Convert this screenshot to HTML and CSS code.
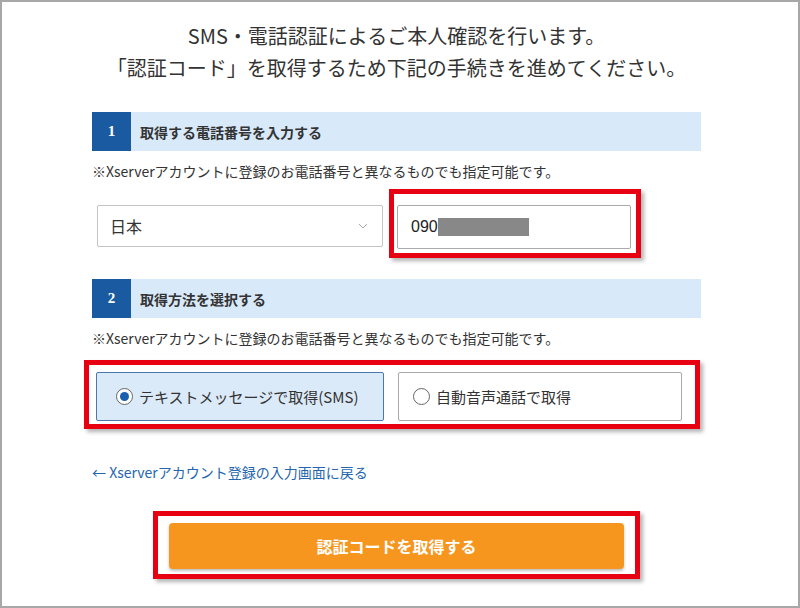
FILE: index.html
```html
<!DOCTYPE html>
<html>

<head>
  <meta charset="utf-8">
  <title>SMS・電話認証</title>
  <link rel="stylesheet" href="styles.css">
</head>

<body>
  <div class="page">

    <!-- Lead text -->
    <p class="lead">SMS・電話認証によるご本人確認を行います。<br>「認証コード」を取得するため下記の手続きを進めてください。</p>

    <!-- Step 1: phone number -->
    <h2 class="step-head"><span class="step-num">1</span>取得する電話番号を入力する</h2>
    <p class="note">※Xserverアカウントに登録のお電話番号と異なるものでも指定可能です。</p>
    <div class="phone-row">
      <div class="select">
        <span>日本</span>
        <svg class="chevron" width="10" height="6" viewBox="0 0 10 6"><path d="M1 1 L5 5 L9 1" fill="none" stroke="#aaa" stroke-width="1"/></svg>
      </div>
      <div class="mark mark-input">
        <div class="input">090<span class="redact"></span></div>
      </div>
    </div>

    <!-- Step 2: method -->
    <h2 class="step-head step-two"><span class="step-num">2</span>取得方法を選択する</h2>
    <p class="note">※Xserverアカウントに登録のお電話番号と異なるものでも指定可能です。</p>
    <div class="mark mark-radio">
      <div class="radio-row">
        <label class="option option-on"><span class="radio radio-on"></span>テキストメッセージで取得(SMS)</label>
        <label class="option option-wide"><span class="radio"></span>自動音声通話で取得</label>
      </div>
    </div>

    <p class="back"><a href="#">← Xserverアカウント登録の入力画面に戻る</a></p>

    <div class="mark mark-button">
      <button class="submit">認証コードを取得する</button>
    </div>

  </div>
</body>

</html>
```

FILE: styles.css
```css
body {
  margin: 0;
  padding: 0;
  background-color: #ffffff;
  font-family: "Noto Sans CJK JP", "Noto Sans", sans-serif;
  color: #333;
}

.page {
  width: 800px;
  height: 608px;
  box-sizing: border-box;
  border: 2px solid #a8a8a8;
  padding: 18px 97px 0 90px;
  overflow: hidden;
}

.lead {
  margin: 0;
  font-size: 20px;
  line-height: 32px;
  text-align: center;
}

/* Step headers */
.step-head {
  margin: 28px 0 0;
  height: 39px;
  display: flex;
  align-items: center;
  background-color: #d8e9fa;
  font-size: 14px;
  font-weight: bold;
  color: #333;
}

.step-two {
  margin-top: 30px;
}

.step-num {
  width: 39px;
  height: 39px;
  margin-right: 9px;
  display: flex;
  align-items: center;
  justify-content: center;
  background-color: #1a5aa0;
  color: white;
  font-family: "Liberation Serif", serif;
  font-size: 15px;
}

.note {
  margin: 10px 0 0;
  font-size: 14px;
  line-height: 20px;
}

/* Phone row */
.phone-row {
  margin-top: 24px;
  padding-left: 5px;
  display: flex;
  gap: 14px;
}

.select {
  width: 286px;
  height: 42px;
  box-sizing: border-box;
  border: 1px solid #c4c4c4;
  border-radius: 2px;
  padding: 0 12px;
  display: flex;
  align-items: center;
  justify-content: space-between;
  font-size: 16px;
}

.chevron {
  margin-right: 2px;
}

.input {
  width: 234px;
  height: 44px;
  box-sizing: border-box;
  border: 1px solid #aaa;
  border-radius: 2px;
  padding-left: 13px;
  display: flex;
  align-items: center;
  font-family: "Liberation Sans", Arial, sans-serif;
  font-size: 16px;
  color: #222;
}

.redact {
  display: inline-block;
  width: 91px;
  height: 18px;
  background-color: #888;
}

/* Red annotation frames */
.mark {
  position: relative;
}

.mark::after {
  content: "";
  position: absolute;
  border: 5px solid #e60012;
  box-shadow: 3px 3px 4px rgba(0, 0, 0, 0.3);
  pointer-events: none;
}

.mark-input::after {
  top: -16px;
  left: -8px;
  right: -10px;
  bottom: -9px;
}

.mark-radio {
  margin-top: 24px;
  width: 590px;
}

.mark-radio::after {
  top: -12px;
  left: -8px;
  right: -18px;
  bottom: -8px;
}

.mark-button {
  margin: 41px auto 0;
  width: 455px;
}

.mark-button::after {
  top: -12px;
  left: -16px;
  right: -16px;
  bottom: -10px;
}

/* Radio options */
.radio-row {
  padding-left: 4px;
  display: flex;
  gap: 14px;
}

.option {
  width: 288px;
  height: 49px;
  box-sizing: border-box;
  border: 1px solid #aaa;
  border-radius: 2px;
  padding-left: 19px;
  display: flex;
  align-items: center;
  font-size: 15px;
  color: #333;
}

.option-wide {
  width: 284px;
  padding-left: 14px;
}

.option-on {
  background-color: #dbeaf8;
  border-color: #4a78ab;
}

.radio {
  width: 17px;
  height: 17px;
  box-sizing: border-box;
  border: 1px solid #666;
  border-radius: 50%;
  margin-right: 6px;
  background-color: white;
  position: relative;
}

.radio-on::after {
  content: "";
  position: absolute;
  top: 3px;
  left: 3px;
  width: 9px;
  height: 9px;
  border-radius: 50%;
  background-color: #1a5fb0;
}

/* Back link */
.back {
  margin: 41px 0 0;
  font-size: 14px;
  line-height: 20px;
}

.back a {
  color: #2566ae;
  text-decoration: none;
}

/* Submit button */
.submit {
  display: block;
  width: 455px;
  height: 46px;
  border: none;
  border-radius: 4px;
  background-color: #f7961f;
  color: white;
  font-family: "Noto Sans CJK JP", sans-serif;
  font-size: 16px;
  font-weight: bold;
  box-shadow: 0 2px 3px rgba(0, 0, 0, 0.25);
  cursor: pointer;
}
```
